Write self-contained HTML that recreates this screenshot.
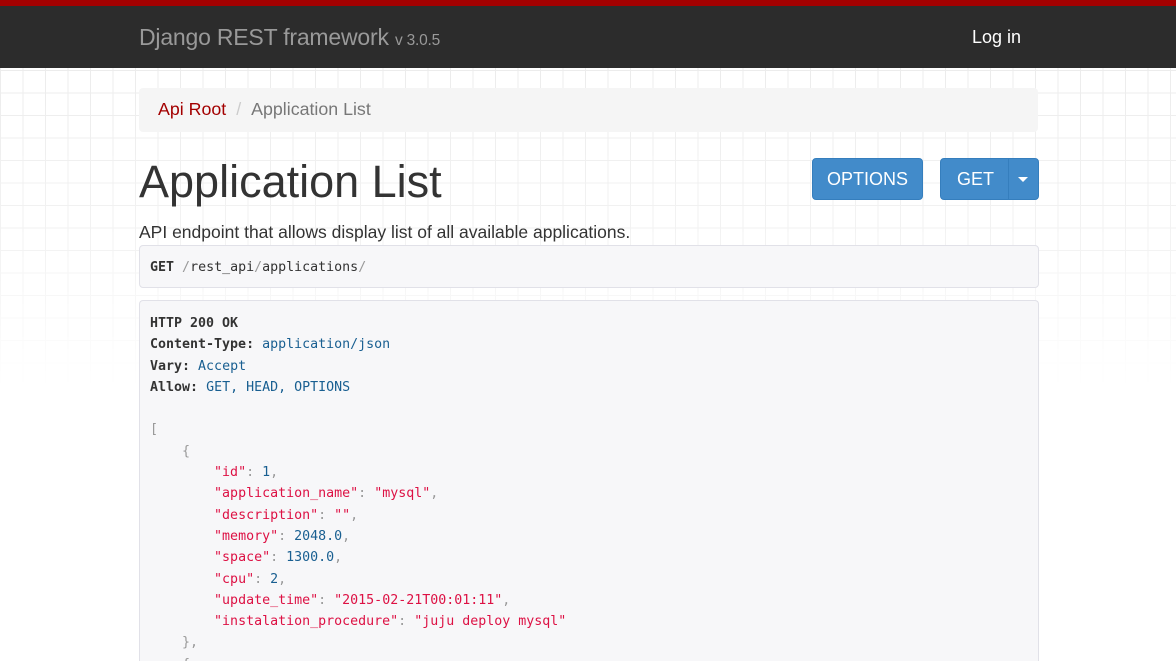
<!DOCTYPE html>
<html><head><meta charset="utf-8"><style>
*{box-sizing:border-box}
html,body{margin:0;width:1176px;height:661px;overflow:hidden}
body{background:#fff;font-family:"Liberation Sans",Helvetica,Arial,sans-serif;color:#333;position:relative}
.grid{position:absolute;left:0;top:68px;width:1176px;height:320px;
background-image:linear-gradient(to right,#ececec 1px,transparent 1px),linear-gradient(to bottom,#ececec 1px,transparent 1px);
background-size:22.5px 22.5px;background-position:0 2px;
-webkit-mask-image:linear-gradient(to bottom,#000 0%,rgba(0,0,0,.6) 60%,transparent 100%);mask-image:linear-gradient(to bottom,#000 0%,rgba(0,0,0,.6) 60%,transparent 100%)}
.nav{position:absolute;left:0;top:0;width:1176px;height:68px;background:#2c2c2c;border-top:6px solid #a30000}
.brand{position:absolute;left:139px;top:18px;font-size:23px;color:#999;letter-spacing:-.2px}
.brand small{font-size:15.5px;color:#999}
.login{position:absolute;left:972px;top:21px;font-size:18px;color:#fff}
.bc{position:absolute;left:139px;top:88px;width:899px;height:44px;background:#f5f5f5;border-radius:4px;font-size:17.8px;padding:11px 19px;color:#777}
.bc a{color:#a30000}
.bc .sep{color:#ccc;padding:0 10px}
h1{position:absolute;left:139px;top:159px;margin:0;font-size:45px;font-weight:normal;color:#333;line-height:1}
.btn{position:absolute;top:158px;height:42px;background:#428bca;border:1px solid #357ebd;border-radius:4px;color:#fff;font-size:18px;line-height:40px;text-align:center}
.desc{position:absolute;left:139px;top:222px;font-size:17.5px;color:#333}
pre{margin:0;font-family:"DejaVu Sans Mono","Liberation Mono",monospace;font-size:13.3px;line-height:21.3px;color:#333}
.box{position:absolute;left:139px;width:900px;background:#f7f7f9;border:1px solid #e1e1e8;border-radius:4px;padding:9px 10px;overflow:hidden}
b{font-weight:bold;color:#333}
.v{color:#195f91}.s{color:#dd1144}.p{color:#999}
</style></head><body>
<div class="grid"></div>
<div class="nav"><div class="brand">Django REST framework <small>v 3.0.5</small></div><div class="login">Log in</div></div>
<div class="bc"><a>Api Root</a><span class="sep">/</span>Application List</div>
<h1>Application List</h1>
<div class="btn" style="left:812px;width:111px">OPTIONS</div>
<div class="btn" style="left:940px;width:99px;text-align:left;padding-left:16px">GET<span style="position:absolute;left:67px;top:0;bottom:0;border-left:1px solid #357ebd"></span><span style="position:absolute;left:77px;top:18px;width:0;height:0;border-left:5px solid transparent;border-right:5px solid transparent;border-top:5px solid #fff"></span></div>
<div class="desc">API endpoint that allows display list of all available applications.</div>
<div class="box" style="top:245px;height:43px;padding-top:11px"><pre><b>GET</b> <span class="p">/</span>rest_api<span class="p">/</span>applications<span class="p">/</span></pre></div>
<div class="box" style="top:300px;height:361px;padding-top:12px;border-bottom:none;border-radius:4px 4px 0 0"><pre><b>HTTP 200 OK</b>
<b>Content-Type:</b> <span class="v">application/json</span>
<b>Vary:</b> <span class="v">Accept</span>
<b>Allow:</b> <span class="v">GET, HEAD, OPTIONS</span>

<span class="p">[</span>
    <span class="p">{</span>
        <span class="s">"id"</span><span class="p">:</span> <span class="v">1</span><span class="p">,</span>
        <span class="s">"application_name"</span><span class="p">:</span> <span class="s">"mysql"</span><span class="p">,</span>
        <span class="s">"description"</span><span class="p">:</span> <span class="s">""</span><span class="p">,</span>
        <span class="s">"memory"</span><span class="p">:</span> <span class="v">2048.0</span><span class="p">,</span>
        <span class="s">"space"</span><span class="p">:</span> <span class="v">1300.0</span><span class="p">,</span>
        <span class="s">"cpu"</span><span class="p">:</span> <span class="v">2</span><span class="p">,</span>
        <span class="s">"update_time"</span><span class="p">:</span> <span class="s">"2015-02-21T00:01:11"</span><span class="p">,</span>
        <span class="s">"instalation_procedure"</span><span class="p">:</span> <span class="s">"juju deploy mysql"</span>
    <span class="p">},</span>
    <span class="p">{</span></pre></div>
</body></html>
